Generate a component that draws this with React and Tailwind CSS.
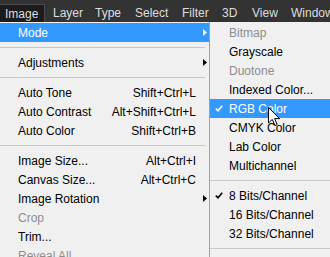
import React from "react";

const BAR = [
  { label: "Image", w: "w-[48px]", active: true },
  { label: "Layer", w: "w-[42px]" },
  { label: "Type", w: "w-[40px]" },
  { label: "Select", w: "w-[47px]" },
  { label: "Filter", w: "w-[40px]" },
  { label: "3D", w: "w-[30px]" },
  { label: "View", w: "w-[39px]" },
  { label: "Window", w: "w-[60px]" },
];

const MAIN = [
  { label: "Mode", arrow: true, active: true },
  { sep: true },
  { label: "Adjustments", arrow: true },
  { sep: true },
  { label: "Auto Tone", key: "Shift+Ctrl+L" },
  { label: "Auto Contrast", key: "Alt+Shift+Ctrl+L" },
  { label: "Auto Color", key: "Shift+Ctrl+B" },
  { sep: true },
  { label: "Image Size...", key: "Alt+Ctrl+I" },
  { label: "Canvas Size...", key: "Alt+Ctrl+C" },
  { label: "Image Rotation", arrow: true },
  { label: "Crop", disabled: true },
  { label: "Trim..." },
  { label: "Reveal All", disabled: true },
];

const MODES = [
  { label: "Bitmap", disabled: true },
  { label: "Grayscale" },
  { label: "Duotone", disabled: true },
  { label: "Indexed Color..." },
  { label: "RGB Color", checked: true, active: true },
  { label: "CMYK Color" },
  { label: "Lab Color" },
  { label: "Multichannel" },
  { sep: true },
  { label: "8 Bits/Channel", checked: true },
  { label: "16 Bits/Channel" },
  { label: "32 Bits/Channel" },
  { sep: true },
];

function tone(item) {
  if (item.active) return "bg-[#3399ff] text-white";
  if (item.disabled) return "text-[#8d8d8d]";
  return "text-black";
}

function Arrow({ light }) {
  return (
    <svg width="4" height="7" viewBox="0 0 4 7" className="absolute left-[203px] top-[6px]">
      <path d="M0 0 L4 3.5 L0 7 Z" fill={light ? "#ffffff" : "#000000"} />
    </svg>
  );
}

function Check({ light }) {
  return (
    <svg width="8" height="7" viewBox="0 0 8 7" className="absolute left-[5px] top-[6px]">
      <path d="M0.8 3.6 L3 5.8 L7.2 0.8" fill="none" stroke={light ? "#ffffff" : "#000000"} strokeWidth="1.6" />
    </svg>
  );
}

export default function App() {
  return (
    <div className="relative w-[330px] h-[257px] overflow-hidden bg-[#f0f0f0] text-[12px] font-['Liberation_Sans',Arial,sans-serif]">
      <div className="flex h-[22px] bg-[#333333] text-[#dedede]">
        {BAR.map((item) => (
          <div key={item.label} className={`${item.w} shrink-0 flex`}>
            <div
              className={`h-[18px] mt-[4px] flex items-center pl-[5px] pr-[6px] ${
                item.active ? "bg-[#1c1c1c] border-r border-t border-[#4a4a4a]" : ""
              }`}
            >
              {item.label}
            </div>
          </div>
        ))}
      </div>

      <div className="flex">
        <div className="w-[209px] pt-[1px] shrink-0">
          {MAIN.map((item, i) =>
            item.sep ? (
              <div key={i} className="h-[11px] flex items-center pr-[4px]">
                <div className="h-px w-full bg-[#c8c8c8]" />
              </div>
            ) : (
              <div key={i} className={`relative h-[19px] flex items-center pl-[18px] pr-[13px] ${tone(item)}`}>
                <span className="flex-1">{item.label}</span>
                {item.key && <span>{item.key}</span>}
                {item.arrow && <Arrow light={item.active} />}
              </div>
            )
          )}
        </div>

        <div className="flex-1 border-l border-[#a0a0a0] pt-[1px]">
          {MODES.map((item, i) =>
            item.sep ? (
              <div key={i} className="h-[11px] flex items-center">
                <div className="h-px w-full bg-[#c8c8c8]" />
              </div>
            ) : (
              <div key={i} className={`relative h-[19px] flex items-center pl-[19px] ${tone(item)}`}>
                {item.label}
                {item.checked && <Check light={item.active} />}
              </div>
            )
          )}
        </div>
      </div>

      <svg width="13" height="20" viewBox="0 0 13 20" className="absolute left-[268px] top-[107px]">
        <path d="M0.5 0.5 L0.5 16 L4.3 12.4 L7 18.6 L9.2 17.6 L6.6 11.6 L11.6 11.6 Z" fill="#ffffff" stroke="#000000" strokeWidth="1" />
      </svg>
    </div>
  );
}
